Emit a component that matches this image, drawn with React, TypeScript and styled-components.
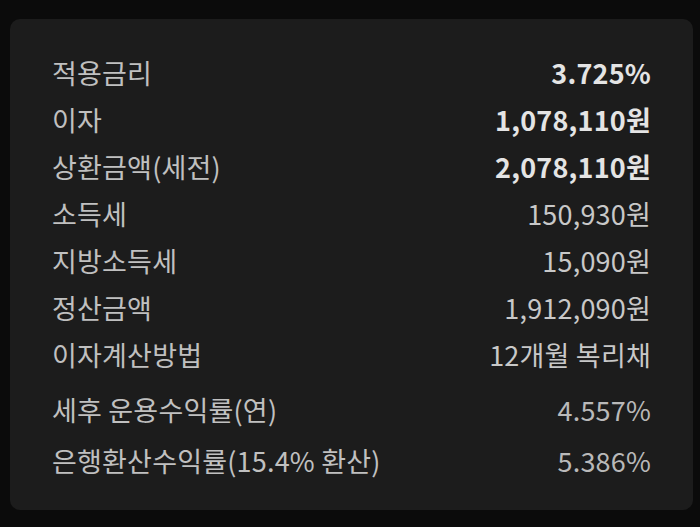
import React from "react";
import styled, { createGlobalStyle } from "styled-components";

const Global = createGlobalStyle`
  html, body {
    margin: 0;
    padding: 0;
    background: #0b0b0b;
  }
  body {
    font-family: "Noto Sans CJK KR", "Noto Sans", sans-serif;
  }
`;

const Page = styled.div`
  width: 700px;
  height: 527px;
  box-sizing: border-box;
  padding: 19px 7px 17px 10px;
  background: #0b0b0b;
`;

const Panel = styled.div`
  height: 100%;
  box-sizing: border-box;
  background: #1c1c1c;
  border-radius: 10px;
  padding: 30px 42px 25px 42px;
  display: flex;
  flex-direction: column;
  gap: 6px;
`;

const Section = styled.div`
  display: flex;
  flex-direction: column;
`;

const Row = styled.div<{ $h: number }>`
  height: ${(p) => p.$h}px;
  display: flex;
  align-items: center;
  justify-content: space-between;
  font-size: 27px;
  letter-spacing: 0.2px;
`;

const Label = styled.span`
  color: #c0c0c0;
  font-weight: 400;
`;

const Value = styled.span<{ $bold?: boolean; $dim?: boolean }>`
  color: ${(p) => (p.$bold ? "#e4e4e4" : p.$dim ? "#b9b9b9" : "#c8c8c8")};
  font-weight: ${(p) => (p.$bold ? 700 : 400)};
`;

type Item = { label: string; value: string; bold?: boolean };

const main: Item[] = [
  { label: "적용금리", value: "3.725%", bold: true },
  { label: "이자", value: "1,078,110원", bold: true },
  { label: "상환금액(세전)", value: "2,078,110원", bold: true },
  { label: "소득세", value: "150,930원" },
  { label: "지방소득세", value: "15,090원" },
  { label: "정산금액", value: "1,912,090원" },
  { label: "이자계산방법", value: "12개월 복리채" },
];

const extra: Item[] = [
  { label: "세후 운용수익률(연)", value: "4.557%" },
  { label: "은행환산수익률(15.4% 환산)", value: "5.386%" },
];

export default function App() {
  return (
    <>
      <Global />
      <Page>
        <Panel>
          <Section>
            {main.map((it) => (
              <Row key={it.label} $h={47}>
                <Label>{it.label}</Label>
                <Value $bold={it.bold}>{it.value}</Value>
              </Row>
            ))}
          </Section>
          <Section>
            {extra.map((it) => (
              <Row key={it.label} $h={51}>
                <Label>{it.label}</Label>
                <Value $dim>{it.value}</Value>
              </Row>
            ))}
          </Section>
        </Panel>
      </Page>
    </>
  );
}
